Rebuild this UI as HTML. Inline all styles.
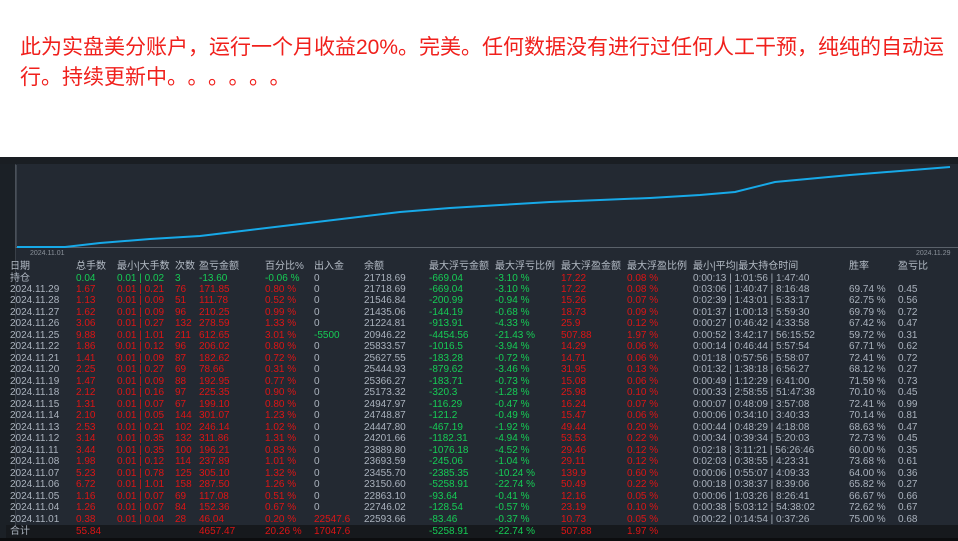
<!DOCTYPE html>
<html><head><meta charset="utf-8"><style>
*{margin:0;padding:0;box-sizing:border-box}
body{width:958px;height:541px;overflow:hidden;background:#fff;position:relative;font-family:"Liberation Sans","Noto Sans CJK SC",sans-serif}
.t{position:absolute;left:20px;top:33px;width:938px;color:#f0201c;font-size:21px;line-height:30px;font-family:"Liberation Sans","Noto Sans CJK SC",sans-serif;white-space:nowrap}
.dots{letter-spacing:10px}
#p{position:absolute;left:0;top:157px;width:958px;height:384px;background:#232932}
#tb{position:absolute;left:0;top:157px;width:958px;height:7px;background:#1a1e23}
#lb{position:absolute;left:0;top:164px;width:16px;height:377px;background:#1b2026;border-right:1px solid #3a4048}
.r{position:absolute;left:0;width:958px;height:11px;font-size:10px;line-height:11px;color:#aab2bd;white-space:nowrap}
.r span{position:absolute}
.h{font-size:10px;line-height:12px;color:#b4bcc6}
.R{color:#dd1515}.G{color:#16cc55}
.s0{left:10px}.s1{left:76px}.s2{left:117px}.s3{left:175px}.s4{left:199px}.s5{left:265px}.s6{left:314px}.s7{left:364px}.s8{left:429px}.s9{left:495px}.s10{left:561px}.s11{left:627px}.s12{left:693px}.s13{left:849px}.s14{left:898px}
#tot{position:absolute;left:6px;top:525px;width:952px;height:13px;background:#16191d}
#bot{position:absolute;left:0;top:538px;width:958px;height:3px;background:#0c0d0f}
</style></head><body>
<div class="t">此为实盘美分账户，运行一个月收益20%。完美。任何数据没有进行过任何人工干预，纯纯的自动运<br>行。持续更新中<span class="dots">。。。。。。</span></div>
<div id="p"></div><div id="tb"></div><div id="lb"></div>
<svg style="position:absolute;left:0;top:160px" width="958" height="100">
<line x1="16" y1="5" x2="16" y2="88" stroke="#5a616a" stroke-width="1"/>
<line x1="16" y1="87.5" x2="958" y2="87.5" stroke="#5a616a" stroke-width="1"/>
<polyline fill="none" stroke="#17a9e8" stroke-width="2" points="17,87 65,87 100,83 150,79 200,76 250,70 300,64 350,58 400,52 450,48 500,45 550,42 600,40 650,38 700,35 735,32 775,22 850,15 950,7"/>
<text x="30" y="95" fill="#8a919a" font-size="7" font-family="Liberation Sans">2024.11.01</text>
<text x="916" y="95" fill="#8a919a" font-size="7" font-family="Liberation Sans">2024.11.29</text>
</svg>
<div id="tot"></div><div id="bot"></div>
<div class="r h" style="top:261px"><span class="s0">日期</span><span class="s1">总手数</span><span class="s2">最小|大手数</span><span class="s3">次数</span><span class="s4">盈亏金额</span><span class="s5">百分比%</span><span class="s6">出入金</span><span class="s7">余额</span><span class="s8">最大浮亏金额</span><span class="s9">最大浮亏比例</span><span class="s10">最大浮盈金额</span><span class="s11">最大浮盈比例</span><span class="s12">最小|平均|最大持仓时间</span><span class="s13">胜率</span><span class="s14">盈亏比</span></div>
<div class="r" style="top:273px"><span class="s0">持仓</span><span class="s1 G">0.04</span><span class="s2 G">0.01 | 0.02</span><span class="s3 G">3</span><span class="s4 G">-13.60</span><span class="s5 G">-0.06 %</span><span class="s6">0</span><span class="s7">21718.69</span><span class="s8 G">-669.04</span><span class="s9 G">-3.10 %</span><span class="s10 R">17.22</span><span class="s11 R">0.08 %</span><span class="s12">0:00:13 | 1:01:56 | 1:47:40</span></div>
<div class="r" style="top:284px"><span class="s0">2024.11.29</span><span class="s1 R">1.67</span><span class="s2 R">0.01 | 0.21</span><span class="s3 R">76</span><span class="s4 R">171.85</span><span class="s5 R">0.80 %</span><span class="s6">0</span><span class="s7">21718.69</span><span class="s8 G">-669.04</span><span class="s9 G">-3.10 %</span><span class="s10 R">17.22</span><span class="s11 R">0.08 %</span><span class="s12">0:03:06 | 1:40:47 | 8:16:48</span><span class="s13">69.74 %</span><span class="s14">0.45</span></div>
<div class="r" style="top:295px"><span class="s0">2024.11.28</span><span class="s1 R">1.13</span><span class="s2 R">0.01 | 0.09</span><span class="s3 R">51</span><span class="s4 R">111.78</span><span class="s5 R">0.52 %</span><span class="s6">0</span><span class="s7">21546.84</span><span class="s8 G">-200.99</span><span class="s9 G">-0.94 %</span><span class="s10 R">15.26</span><span class="s11 R">0.07 %</span><span class="s12">0:02:39 | 1:43:01 | 5:33:17</span><span class="s13">62.75 %</span><span class="s14">0.56</span></div>
<div class="r" style="top:307px"><span class="s0">2024.11.27</span><span class="s1 R">1.62</span><span class="s2 R">0.01 | 0.09</span><span class="s3 R">96</span><span class="s4 R">210.25</span><span class="s5 R">0.99 %</span><span class="s6">0</span><span class="s7">21435.06</span><span class="s8 G">-144.19</span><span class="s9 G">-0.68 %</span><span class="s10 R">18.73</span><span class="s11 R">0.09 %</span><span class="s12">0:01:37 | 1:00:13 | 5:59:30</span><span class="s13">69.79 %</span><span class="s14">0.72</span></div>
<div class="r" style="top:318px"><span class="s0">2024.11.26</span><span class="s1 R">3.06</span><span class="s2 R">0.01 | 0.27</span><span class="s3 R">132</span><span class="s4 R">278.59</span><span class="s5 R">1.33 %</span><span class="s6">0</span><span class="s7">21224.81</span><span class="s8 G">-913.91</span><span class="s9 G">-4.33 %</span><span class="s10 R">25.9</span><span class="s11 R">0.12 %</span><span class="s12">0:00:27 | 0:46:42 | 4:33:58</span><span class="s13">67.42 %</span><span class="s14">0.47</span></div>
<div class="r" style="top:330px"><span class="s0">2024.11.25</span><span class="s1 R">9.88</span><span class="s2 R">0.01 | 1.01</span><span class="s3 R">211</span><span class="s4 R">612.65</span><span class="s5 R">3.01 %</span><span class="s6 G">-5500</span><span class="s7">20946.22</span><span class="s8 G">-4454.56</span><span class="s9 G">-21.43 %</span><span class="s10 R">507.88</span><span class="s11 R">1.97 %</span><span class="s12">0:00:52 | 3:42:17 | 56:15:52</span><span class="s13">59.72 %</span><span class="s14">0.31</span></div>
<div class="r" style="top:341px"><span class="s0">2024.11.22</span><span class="s1 R">1.86</span><span class="s2 R">0.01 | 0.12</span><span class="s3 R">96</span><span class="s4 R">206.02</span><span class="s5 R">0.80 %</span><span class="s6">0</span><span class="s7">25833.57</span><span class="s8 G">-1016.5</span><span class="s9 G">-3.94 %</span><span class="s10 R">14.29</span><span class="s11 R">0.06 %</span><span class="s12">0:00:14 | 0:46:44 | 5:57:54</span><span class="s13">67.71 %</span><span class="s14">0.62</span></div>
<div class="r" style="top:353px"><span class="s0">2024.11.21</span><span class="s1 R">1.41</span><span class="s2 R">0.01 | 0.09</span><span class="s3 R">87</span><span class="s4 R">182.62</span><span class="s5 R">0.72 %</span><span class="s6">0</span><span class="s7">25627.55</span><span class="s8 G">-183.28</span><span class="s9 G">-0.72 %</span><span class="s10 R">14.71</span><span class="s11 R">0.06 %</span><span class="s12">0:01:18 | 0:57:56 | 5:58:07</span><span class="s13">72.41 %</span><span class="s14">0.72</span></div>
<div class="r" style="top:364px"><span class="s0">2024.11.20</span><span class="s1 R">2.25</span><span class="s2 R">0.01 | 0.27</span><span class="s3 R">69</span><span class="s4 R">78.66</span><span class="s5 R">0.31 %</span><span class="s6">0</span><span class="s7">25444.93</span><span class="s8 G">-879.62</span><span class="s9 G">-3.46 %</span><span class="s10 R">31.95</span><span class="s11 R">0.13 %</span><span class="s12">0:01:32 | 1:38:18 | 6:56:27</span><span class="s13">68.12 %</span><span class="s14">0.27</span></div>
<div class="r" style="top:376px"><span class="s0">2024.11.19</span><span class="s1 R">1.47</span><span class="s2 R">0.01 | 0.09</span><span class="s3 R">88</span><span class="s4 R">192.95</span><span class="s5 R">0.77 %</span><span class="s6">0</span><span class="s7">25366.27</span><span class="s8 G">-183.71</span><span class="s9 G">-0.73 %</span><span class="s10 R">15.08</span><span class="s11 R">0.06 %</span><span class="s12">0:00:49 | 1:12:29 | 6:41:00</span><span class="s13">71.59 %</span><span class="s14">0.73</span></div>
<div class="r" style="top:387px"><span class="s0">2024.11.18</span><span class="s1 R">2.12</span><span class="s2 R">0.01 | 0.16</span><span class="s3 R">97</span><span class="s4 R">225.35</span><span class="s5 R">0.90 %</span><span class="s6">0</span><span class="s7">25173.32</span><span class="s8 G">-320.3</span><span class="s9 G">-1.28 %</span><span class="s10 R">25.98</span><span class="s11 R">0.10 %</span><span class="s12">0:00:33 | 2:58:55 | 51:47:38</span><span class="s13">70.10 %</span><span class="s14">0.45</span></div>
<div class="r" style="top:399px"><span class="s0">2024.11.15</span><span class="s1 R">1.31</span><span class="s2 R">0.01 | 0.07</span><span class="s3 R">67</span><span class="s4 R">199.10</span><span class="s5 R">0.80 %</span><span class="s6">0</span><span class="s7">24947.97</span><span class="s8 G">-116.29</span><span class="s9 G">-0.47 %</span><span class="s10 R">16.24</span><span class="s11 R">0.07 %</span><span class="s12">0:00:07 | 0:48:09 | 3:57:08</span><span class="s13">72.41 %</span><span class="s14">0.99</span></div>
<div class="r" style="top:410px"><span class="s0">2024.11.14</span><span class="s1 R">2.10</span><span class="s2 R">0.01 | 0.05</span><span class="s3 R">144</span><span class="s4 R">301.07</span><span class="s5 R">1.23 %</span><span class="s6">0</span><span class="s7">24748.87</span><span class="s8 G">-121.2</span><span class="s9 G">-0.49 %</span><span class="s10 R">15.47</span><span class="s11 R">0.06 %</span><span class="s12">0:00:06 | 0:34:10 | 3:40:33</span><span class="s13">70.14 %</span><span class="s14">0.81</span></div>
<div class="r" style="top:422px"><span class="s0">2024.11.13</span><span class="s1 R">2.53</span><span class="s2 R">0.01 | 0.21</span><span class="s3 R">102</span><span class="s4 R">246.14</span><span class="s5 R">1.02 %</span><span class="s6">0</span><span class="s7">24447.80</span><span class="s8 G">-467.19</span><span class="s9 G">-1.92 %</span><span class="s10 R">49.44</span><span class="s11 R">0.20 %</span><span class="s12">0:00:44 | 0:48:29 | 4:18:08</span><span class="s13">68.63 %</span><span class="s14">0.47</span></div>
<div class="r" style="top:433px"><span class="s0">2024.11.12</span><span class="s1 R">3.14</span><span class="s2 R">0.01 | 0.35</span><span class="s3 R">132</span><span class="s4 R">311.86</span><span class="s5 R">1.31 %</span><span class="s6">0</span><span class="s7">24201.66</span><span class="s8 G">-1182.31</span><span class="s9 G">-4.94 %</span><span class="s10 R">53.53</span><span class="s11 R">0.22 %</span><span class="s12">0:00:34 | 0:39:34 | 5:20:03</span><span class="s13">72.73 %</span><span class="s14">0.45</span></div>
<div class="r" style="top:445px"><span class="s0">2024.11.11</span><span class="s1 R">3.44</span><span class="s2 R">0.01 | 0.35</span><span class="s3 R">100</span><span class="s4 R">196.21</span><span class="s5 R">0.83 %</span><span class="s6">0</span><span class="s7">23889.80</span><span class="s8 G">-1076.18</span><span class="s9 G">-4.52 %</span><span class="s10 R">29.46</span><span class="s11 R">0.12 %</span><span class="s12">0:02:18 | 3:11:21 | 56:26:46</span><span class="s13">60.00 %</span><span class="s14">0.35</span></div>
<div class="r" style="top:456px"><span class="s0">2024.11.08</span><span class="s1 R">1.98</span><span class="s2 R">0.01 | 0.12</span><span class="s3 R">114</span><span class="s4 R">237.89</span><span class="s5 R">1.01 %</span><span class="s6">0</span><span class="s7">23693.59</span><span class="s8 G">-245.06</span><span class="s9 G">-1.04 %</span><span class="s10 R">29.11</span><span class="s11 R">0.12 %</span><span class="s12">0:02:03 | 0:38:55 | 4:23:31</span><span class="s13">73.68 %</span><span class="s14">0.61</span></div>
<div class="r" style="top:468px"><span class="s0">2024.11.07</span><span class="s1 R">5.23</span><span class="s2 R">0.01 | 0.78</span><span class="s3 R">125</span><span class="s4 R">305.10</span><span class="s5 R">1.32 %</span><span class="s6">0</span><span class="s7">23455.70</span><span class="s8 G">-2385.35</span><span class="s9 G">-10.24 %</span><span class="s10 R">139.9</span><span class="s11 R">0.60 %</span><span class="s12">0:00:06 | 0:55:07 | 4:09:33</span><span class="s13">64.00 %</span><span class="s14">0.36</span></div>
<div class="r" style="top:479px"><span class="s0">2024.11.06</span><span class="s1 R">6.72</span><span class="s2 R">0.01 | 1.01</span><span class="s3 R">158</span><span class="s4 R">287.50</span><span class="s5 R">1.26 %</span><span class="s6">0</span><span class="s7">23150.60</span><span class="s8 G">-5258.91</span><span class="s9 G">-22.74 %</span><span class="s10 R">50.49</span><span class="s11 R">0.22 %</span><span class="s12">0:00:18 | 0:38:37 | 8:39:06</span><span class="s13">65.82 %</span><span class="s14">0.27</span></div>
<div class="r" style="top:491px"><span class="s0">2024.11.05</span><span class="s1 R">1.16</span><span class="s2 R">0.01 | 0.07</span><span class="s3 R">69</span><span class="s4 R">117.08</span><span class="s5 R">0.51 %</span><span class="s6">0</span><span class="s7">22863.10</span><span class="s8 G">-93.64</span><span class="s9 G">-0.41 %</span><span class="s10 R">12.16</span><span class="s11 R">0.05 %</span><span class="s12">0:00:06 | 1:03:26 | 8:26:41</span><span class="s13">66.67 %</span><span class="s14">0.66</span></div>
<div class="r" style="top:502px"><span class="s0">2024.11.04</span><span class="s1 R">1.26</span><span class="s2 R">0.01 | 0.07</span><span class="s3 R">84</span><span class="s4 R">152.36</span><span class="s5 R">0.67 %</span><span class="s6">0</span><span class="s7">22746.02</span><span class="s8 G">-128.54</span><span class="s9 G">-0.57 %</span><span class="s10 R">23.19</span><span class="s11 R">0.10 %</span><span class="s12">0:00:38 | 5:03:12 | 54:38:02</span><span class="s13">72.62 %</span><span class="s14">0.67</span></div>
<div class="r" style="top:514px"><span class="s0">2024.11.01</span><span class="s1 R">0.38</span><span class="s2 R">0.01 | 0.04</span><span class="s3 R">28</span><span class="s4 R">46.04</span><span class="s5 R">0.20 %</span><span class="s6 R">22547.6</span><span class="s7">22593.66</span><span class="s8 G">-83.46</span><span class="s9 G">-0.37 %</span><span class="s10 R">10.73</span><span class="s11 R">0.05 %</span><span class="s12">0:00:22 | 0:14:54 | 0:37:26</span><span class="s13">75.00 %</span><span class="s14">0.68</span></div>
<div class="r" style="top:526px"><span class="s0">合计</span><span class="s1 R">55.84</span><span class="s4 R">4657.47</span><span class="s5 R">20.26 %</span><span class="s6 R">17047.6</span><span class="s8 G">-5258.91</span><span class="s9 G">-22.74 %</span><span class="s10 R">507.88</span><span class="s11 R">1.97 %</span></div>
</body></html>
